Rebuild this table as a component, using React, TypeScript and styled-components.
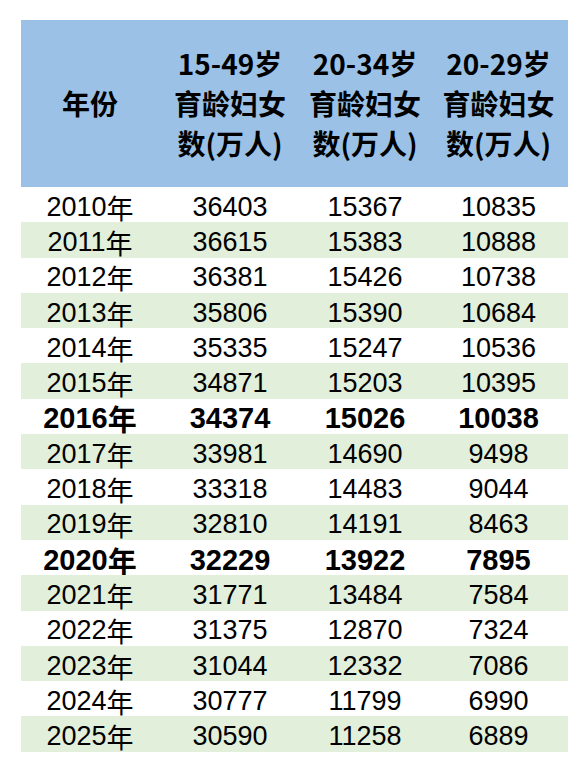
import React from "react";
import styled, { createGlobalStyle } from "styled-components";

const Global = createGlobalStyle`
  html, body { margin: 0; padding: 0; background: #ffffff; }
  body { font-family: "Liberation Sans", "Noto Sans CJK SC", sans-serif; }
`;

const Page = styled.div`
  padding: 20px 0 0 21px;
`;

const Table = styled.div`
  display: grid;
  grid-template-columns: 138px 142px 128px 139px;
  grid-template-rows: 167px;
  grid-auto-rows: 35.3px;
  width: 547px;
`;

const HeadCell = styled.div`
  background: #9bc2e6;
  display: flex;
  flex-direction: column;
  align-items: center;
  justify-content: center;
  font-family: "Noto Sans CJK SC", "Liberation Sans", sans-serif;
  font-weight: 700;
  font-size: 28px;
  line-height: 40px;
  color: #000;
  padding-bottom: 2px;
  white-space: nowrap;
`;

const Cell = styled.div<{ $shade: boolean; $bold: boolean }>`
  background: ${(p) => (p.$shade ? "#e2efda" : "#ffffff")};
  display: flex;
  align-items: center;
  justify-content: center;
  padding-top: 5px;
  box-sizing: border-box;
  font-family: "Liberation Sans", "Noto Sans CJK SC", sans-serif;
  font-weight: ${(p) => (p.$bold ? 700 : 400)};
  font-size: ${(p) => (p.$bold ? "29px" : "27px")};
  line-height: 1;
  color: #000;
  white-space: nowrap;
`;

const Nian = styled.span`
  font-family: "Noto Sans CJK SC", sans-serif;
  line-height: 1;
`;

const rows: [number, number, number, number][] = [
  [2010, 36403, 15367, 10835],
  [2011, 36615, 15383, 10888],
  [2012, 36381, 15426, 10738],
  [2013, 35806, 15390, 10684],
  [2014, 35335, 15247, 10536],
  [2015, 34871, 15203, 10395],
  [2016, 34374, 15026, 10038],
  [2017, 33981, 14690, 9498],
  [2018, 33318, 14483, 9044],
  [2019, 32810, 14191, 8463],
  [2020, 32229, 13922, 7895],
  [2021, 31771, 13484, 7584],
  [2022, 31375, 12870, 7324],
  [2023, 31044, 12332, 7086],
  [2024, 30777, 11799, 6990],
  [2025, 30590, 11258, 6889],
];

const heads = ["15-49岁", "20-34岁", "20-29岁"];

export default function App() {
  return (
    <Page>
      <Global />
      <Table>
        <HeadCell>年份</HeadCell>
        {heads.map((h) => (
          <HeadCell key={h}>
            <span>{h}</span>
            <span>育龄妇女</span>
            <span>数(万人)</span>
          </HeadCell>
        ))}
        {rows.map((r, i) => {
          const shade = i % 2 === 1;
          const bold = r[0] === 2016 || r[0] === 2020;
          return (
            <React.Fragment key={r[0]}>
              <Cell $shade={shade} $bold={bold}>
                {r[0]}
                <Nian>年</Nian>
              </Cell>
              <Cell $shade={shade} $bold={bold}>{r[1]}</Cell>
              <Cell $shade={shade} $bold={bold}>{r[2]}</Cell>
              <Cell $shade={shade} $bold={bold}>{r[3]}</Cell>
            </React.Fragment>
          );
        })}
      </Table>
    </Page>
  );
}
